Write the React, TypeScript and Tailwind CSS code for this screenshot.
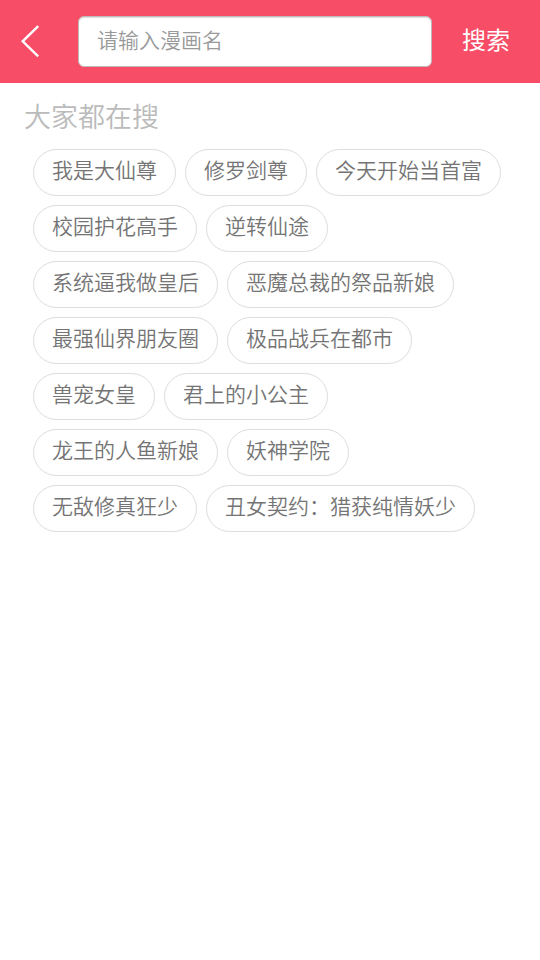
import { useState } from 'react';

const keywords = [
  '我是大仙尊',
  '修罗剑尊',
  '今天开始当首富',
  '校园护花高手',
  '逆转仙途',
  '系统逼我做皇后',
  '恶魔总裁的祭品新娘',
  '最强仙界朋友圈',
  '极品战兵在都市',
  '兽宠女皇',
  '君上的小公主',
  '龙王的人鱼新娘',
  '妖神学院',
  '无敌修真狂少',
  '丑女契约：猎获纯情妖少',
];

export default function App() {
  const [query, setQuery] = useState('');

  return (
    <div lang="zh-CN" className="min-h-screen bg-white font-['Noto_Sans_CJK_SC',sans-serif]">
      {/* Search bar */}
      <header className="bg-[#f74d66]">
        <form className="flex items-center h-[83px]" onSubmit={(e) => e.preventDefault()}>
          <button type="button" aria-label="返回" className="w-[78px] h-full pl-5 shrink-0">
            <svg className="w-5 h-9" viewBox="0 0 20 36" fill="none" stroke="white" strokeWidth={2.4}>
              <path d="M18.2 2.2L2.7 17.3L18.2 32.4" />
            </svg>
          </button>
          <input
            type="text"
            aria-label="漫画名"
            placeholder="请输入漫画名"
            value={query}
            onChange={(e) => setQuery(e.target.value)}
            className="flex-1 min-w-0 h-[51px] px-[18px] pb-[6px] rounded-md border border-[#c0b8b9] bg-white shadow-[inset_0_1px_1px_#ddd] text-[21px] font-[350] text-gray-700 placeholder:text-[#999] outline-none"
          />
          <button type="submit" className="w-[108px] h-full pb-[6px] shrink-0 text-2xl text-white">
            搜索
          </button>
        </form>
      </header>

      {/* Popular searches */}
      <main className="px-6 pt-[15px]">
        <h2 className="text-[27px] leading-9 font-[350] text-[#bbb]">大家都在搜</h2>
        <div className="flex flex-wrap gap-[9px] pl-[9px] pt-[15px]">
          {keywords.map((word) => (
            <button
              key={word}
              type="button"
              onClick={() => setQuery(word)}
              className="h-[47px] px-[18px] pb-[6px] rounded-full border border-[#ddd] text-[21px] font-[350] text-[#747474] whitespace-nowrap"
            >
              {word}
            </button>
          ))}
        </div>
      </main>
    </div>
  );
}
